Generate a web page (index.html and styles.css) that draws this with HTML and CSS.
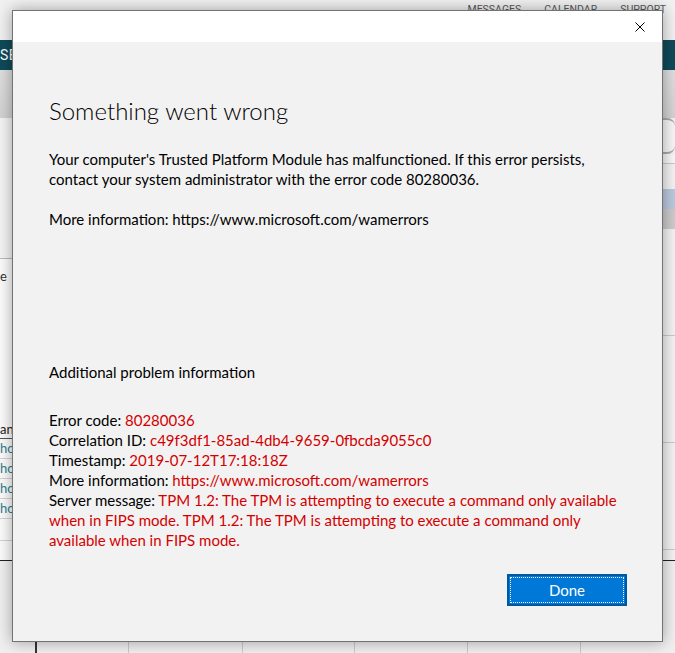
FILE: index.html
```
<!DOCTYPE html>
<html lang="en">
<head>
<meta charset="utf-8">
<title>Something went wrong</title>
<link rel="stylesheet" href="styles.css">
</head>
<body>
<div class="app">
  <header class="topnav">
    <a class="nav-item">Messages</a>
    <a class="nav-item">Calendar</a>
    <a class="nav-item">Support</a>
  </header>
  <div class="brandbar"><span class="clip">SEARCH</span></div>
  <div class="toolbar"></div>
  <div class="workspace">
    <div class="panes">
      <section class="pane pane-left">
        <div class="pane-head"></div>
        <div class="note"><span class="clip">e</span></div>
        <div class="pane-spacer"></div>
        <div class="table">
          <div class="thead"><span class="clip">an</span></div>
          <div class="trow"><a class="link clip">how</a></div>
          <div class="trow"><a class="link clip">how</a></div>
          <div class="trow"><a class="link clip">how</a></div>
          <div class="trow"><a class="link clip">how</a></div>
          <div class="trow tall"></div>
        </div>
      </section>
      <section class="pane pane-right">
        <div class="search"></div>
        <div class="filters"></div>
        <div class="rrow"></div>
        <div class="rrow selected"></div>
        <div class="rrow header"></div>
        <div class="ritem"></div>
        <div class="ritem"></div>
        <div class="ritem"></div>
      </section>
    </div>
    <div class="foot">
      <div class="fcol"></div>
      <div class="fcol dark"></div>
      <div class="fcol"></div>
      <div class="fcol"></div>
      <div class="fcol"></div>
      <div class="fcol"></div>
      <div class="fcol"></div>
    </div>
  </div>
</div>

<div class="dialog" role="dialog" aria-labelledby="dlg-title">
  <div class="titlebar">
    <button class="close" aria-label="Close">
      <svg width="10" height="10" viewBox="0 0 10 10"><path d="M0.5 0.5 L9.5 9.5 M9.5 0.5 L0.5 9.5" stroke="#000" stroke-width="1" fill="none"/></svg>
    </button>
  </div>
  <div class="content">
    <h1 id="dlg-title" class="title">Something went wrong</h1>
    <p class="intro">Your computer's Trusted Platform Module has malfunctioned. If this error persists, contact your system administrator with the error code 80280036.</p>
    <p class="more">More information: https://www.microsoft.com/wamerrors</p>
    <h2 class="subhead">Additional problem information</h2>
    <div class="details">
      <div>Error code: <span class="err">80280036</span></div>
      <div>Correlation ID: <span class="err">c49f3df1-85ad-4db4-9659-0fbcda9055c0</span></div>
      <div>Timestamp: <span class="err">2019-07-12T17:18:18Z</span></div>
      <div>More information: <span class="err">https://www.microsoft.com/wamerrors</span></div>
      <div>Server message: <span class="err">TPM 1.2: The TPM is attempting to execute a command only available when in FIPS mode. TPM 1.2: The TPM is attempting to execute a command only available when in FIPS mode.</span></div>
    </div>
    <div class="actions">
      <button class="done">Done</button>
    </div>
  </div>
</div>
</body>
</html>
```
FILE: styles.css
```
* { box-sizing: border-box; }
html, body { margin: 0; padding: 0; }
body {
  width: 675px;
  height: 653px;
  overflow: hidden;
  position: relative;
  font-family: "Lato", "Liberation Sans", sans-serif;
  background: #f3f3f3;
}

/* ---------- background application ---------- */
.app {
  height: 653px;
  display: flex;
  flex-direction: column;
}
.clip {
  display: block;
  width: 12px;
  overflow: hidden;
  white-space: nowrap;
}
.topnav {
  height: 40px;
  background: #f1f1f1;
  display: flex;
  justify-content: flex-end;
  gap: 23px;
  padding: 3px 9px 0 0;
}
.nav-item {
  font-family: Roboto, "Liberation Sans", sans-serif;
  font-size: 10.5px;
  line-height: 14px;
  text-transform: uppercase;
  color: #585858;
  letter-spacing: 0;
}
.brandbar {
  height: 30px;
  background: #0f4a59;
  color: #fff;
  font-family: Roboto, "Liberation Sans", sans-serif;
  font-size: 14px;
  line-height: 30px;
  letter-spacing: 0.5px;
}
.toolbar {
  height: 48px;
  background: linear-gradient(#dedede, #d2d2d2);
}
.workspace {
  flex: 1;
  display: flex;
  flex-direction: column;
}
.panes {
  height: 442px;
  display: grid;
  grid-template-columns: 1fr 1fr;
}
.pane { display: flex; flex-direction: column; }
.pane-left { background: #fbfbfb; }
.pane-head {
  height: 141px;
  background: #f4f4f4;
  border-bottom: 1px solid #b9b9b9;
}
.note {
  height: 34px;
  font-size: 13px;
  line-height: 34px;
  color: #333;
}
.pane-spacer { flex: 1; }
.table { display: flex; flex-direction: column; font-size: 13px; }
.thead {
  height: 18px;
  line-height: 16px;
  color: #222;
  border-bottom: 1px solid #555;
}
.trow {
  height: 20px;
  line-height: 19px;
  border-bottom: 1px solid #d2d2d2;
}
.trow.tall { height: 22px; margin-bottom: 19px; }
.link { color: #2b7d8e; }

.pane-right { background: #f2f2f2; }
.search {
  height: 36px;
  border-top: 2px solid #a9a9a9;
  border-bottom: 2px solid #a9a9a9;
  border-radius: 8px;
  background: #f6f6f6;
}
.filters { height: 10px; border-bottom: 1px solid #c9c9c9; background: #f7f7f7; }
.rrow { height: 25px; background: #f2f2f2; }
.rrow.selected { height: 20px; background: #bac9de; }
.rrow.header { height: 20px; background: #cbcbcb; }
.ritem { height: 107px; border-bottom: 1px solid #c9c9c9; background: #f2f2f2; }

.foot {
  flex: 1;
  display: grid;
  grid-template-columns: 35px 93px 114px 112px 113px 113px 1fr;
  border-top: 1px solid #222;
  background: #efefef;
}
.fcol { border-left: 1px solid #c9c9c9; }
.fcol:first-child { border-left: 0; }
.fcol.dark { border-left: 2px solid #333; }

/* ---------- dialog ---------- */
.dialog {
  position: absolute;
  left: 12px;
  top: 10px;
  width: 651px;
  height: 632px;
  border: 1px solid #737373;
  background: #f2f2f2;
  box-shadow: 0 0 14px rgba(0, 0, 0, 0.35);
  display: flex;
  flex-direction: column;
}
.titlebar {
  height: 31px;
  background: #fff;
  display: flex;
  justify-content: flex-end;
}
.close {
  width: 44px;
  height: 31px;
  border: 0;
  padding: 0;
  background: transparent;
  display: flex;
  align-items: center;
  justify-content: center;
}
.content {
  flex: 1;
  display: flex;
  flex-direction: column;
  padding: 53px 35px 0 36px;
  color: #000;
  font-size: 15px;
  line-height: 20px;
}
.title {
  margin: 0;
  font-size: 24px;
  font-weight: 300;
  line-height: 32px;
}
.intro { margin: 22px 0 0; }
.more { margin: 20px 0 0; }
.subhead {
  margin: 133px 0 0;
  font-size: 15px;
  font-weight: 400;
  line-height: 20px;
}
.details { margin-top: 28px; }
.err { color: #d40000; }
.actions {
  margin-top: 24px;
  display: flex;
  justify-content: flex-end;
}
.done {
  width: 120px;
  height: 32px;
  background: #0078d7;
  border: 2px solid #00589f;
  outline: 1px dotted #fff;
  outline-offset: -4px;
  color: #fff;
  font-family: "Lato", "Liberation Sans", sans-serif;
  font-size: 15px;
  line-height: 26px;
  padding: 0;
}
```
